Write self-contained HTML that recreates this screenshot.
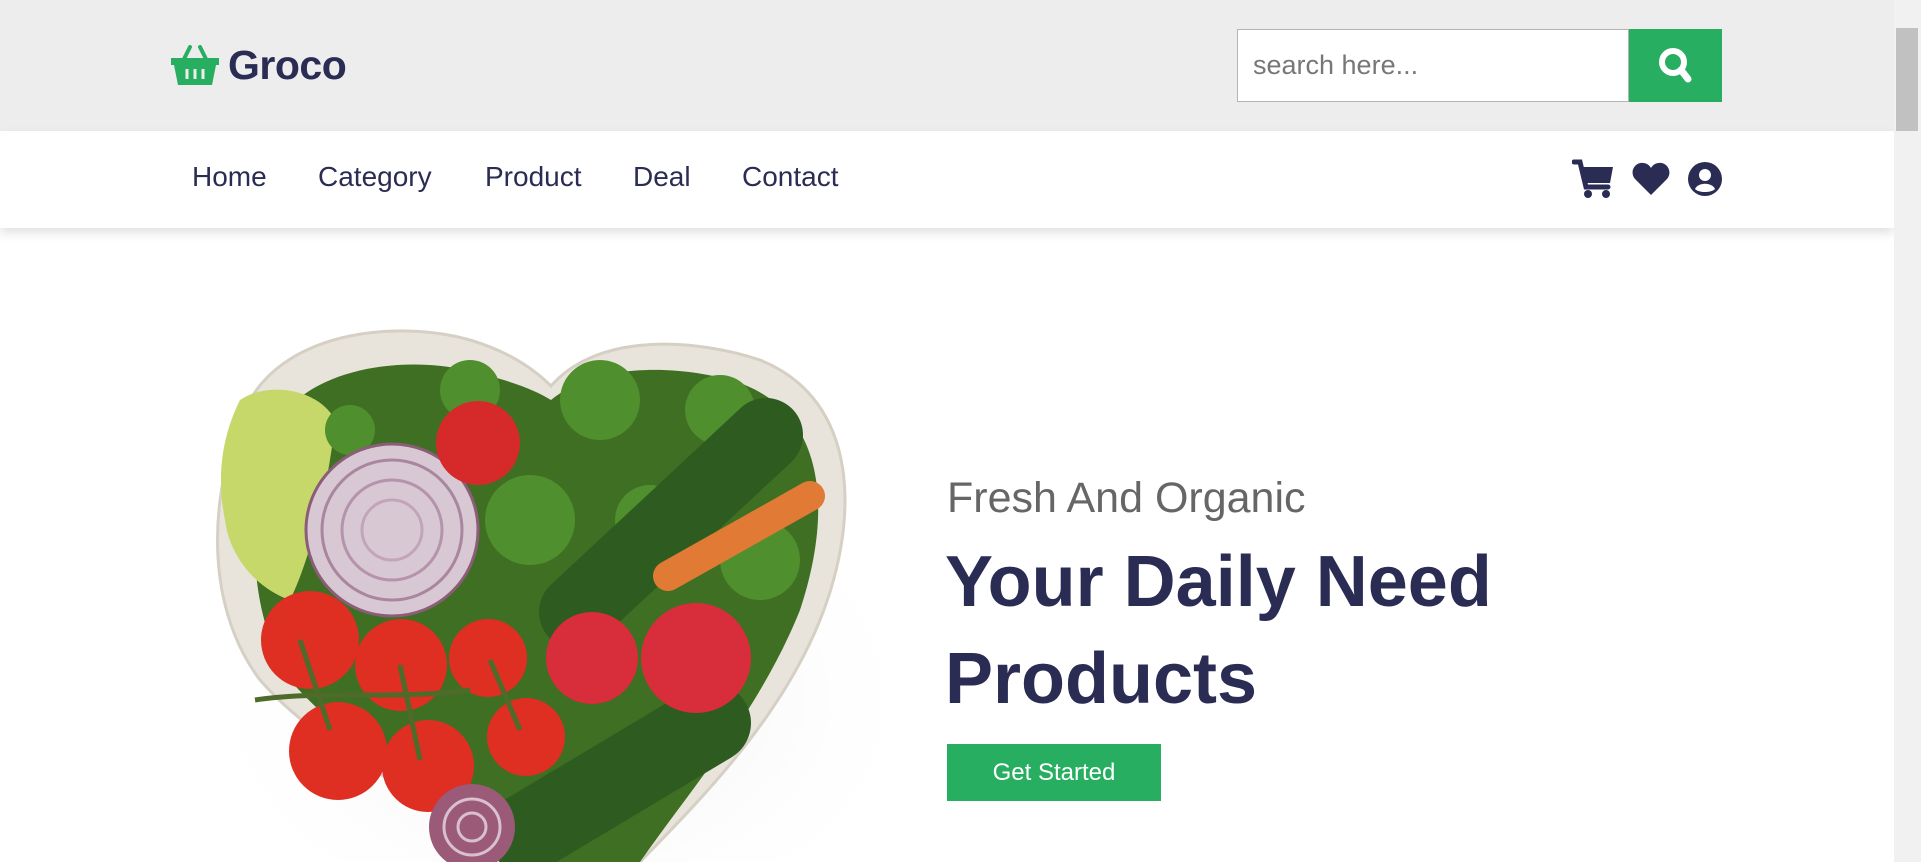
<!DOCTYPE html>
<html><head><meta charset="utf-8"><style>
*{margin:0;padding:0;box-sizing:border-box}
html,body{width:1921px;height:862px;overflow:hidden;background:#fff;font-family:"Liberation Sans",sans-serif}
.top{position:absolute;left:0;top:0;width:1894px;height:131px;background:#ededed}
.logo{position:absolute;left:170px;top:42px;display:flex;align-items:center}
.logo span{font-size:41px;font-weight:bold;color:#2a2c54;margin-left:8px;letter-spacing:-0.5px}
.search{position:absolute;left:1237px;top:29px;width:392px;height:73px;border:1px solid #b5b5b5;background:#fff;font-size:27px;color:#777;padding:20px 0 0 15px}
.sbtn{position:absolute;left:1629px;top:29px;width:93px;height:73px;background:#27ae60}
.nav{position:absolute;left:0;top:131px;width:1894px;height:97px;background:#fff;box-shadow:0 5px 10px rgba(0,0,0,.12)}
.nav a{position:absolute;top:30px;font-size:28px;color:#2a2c54;text-decoration:none}
.sb{position:absolute;left:1894px;top:0;width:27px;height:862px;background:#f1f1f1}
.thumb{position:absolute;left:1896px;top:28px;width:22px;height:103px;background:#c1c1c1}
.h3{position:absolute;left:947px;top:474px;font-size:43px;color:#666}
.h1{position:absolute;left:945px;top:534px;font-size:72px;font-weight:bold;color:#2a2c54;line-height:97px}
.btn{position:absolute;left:947px;top:744px;width:214px;height:57px;background:#27ae60;color:#fff;font-size:24px;text-align:center;line-height:57px}
</style></head><body>
<div class="top">
 <div class="logo"><svg width="50" height="42" viewBox="0 0 50 42"><path d="M14 14 L20 2 M36 14 L30 2" stroke="#27ae60" stroke-width="4" stroke-linecap="round"/><path d="M1 13 H49 V20 H46 L42 40 H8 L4 20 H1Z" fill="#27ae60"/><path d="M17 24V34M25 24V34M33 24V34" stroke="#ededed" stroke-width="3"/></svg><span>Groco</span></div>
 <div class="search">search here...</div>
 <div class="sbtn"><svg width="93" height="73" viewBox="0 0 93 73"><circle cx="44" cy="33" r="11" fill="none" stroke="#fff" stroke-width="6"/><path d="M52 41 L59 50" stroke="#fff" stroke-width="7" stroke-linecap="round"/></svg></div>
</div>
<div class="nav">
 <a style="left:192px">Home</a><a style="left:318px">Category</a><a style="left:485px">Product</a><a style="left:633px">Deal</a><a style="left:742px">Contact</a>
 <svg style="position:absolute;left:1572px;top:28px" width="44" height="40" viewBox="0 0 44 40"><path d="M2 3 H8 L14 28 H36" stroke="#2a2c54" stroke-width="5" fill="none" stroke-linecap="round"/><path d="M9 8 H41 L38 24 H13Z" fill="#2a2c54"/><circle cx="16" cy="35" r="4" fill="#2a2c54"/><circle cx="34" cy="35" r="4" fill="#2a2c54"/></svg>
 <svg style="position:absolute;left:1632px;top:31px" width="38" height="34" viewBox="0 0 38 34"><path d="M19 33 L3 17 C-3 10 3 0 11 1 C15 1 18 4 19 6 C20 4 23 1 27 1 C35 0 41 10 35 17Z" fill="#2a2c54"/></svg>
 <svg style="position:absolute;left:1687px;top:30px" width="36" height="36" viewBox="0 0 36 36"><circle cx="18" cy="18" r="17" fill="#2a2c54"/><circle cx="18" cy="14" r="6" fill="#fff"/><path d="M8 28 C11 21 25 21 28 28 C24 32 12 32 8 28Z" fill="#fff"/></svg>
</div>
<div class="sb"></div><div class="thumb"></div>
<svg style="position:absolute;left:0;top:228px" width="1894" height="634" viewBox="0 228 1894 634">
 <defs><radialGradient id="sh" cx="0.5" cy="0.5" r="0.5"><stop offset="0" stop-color="#ececec"/><stop offset="1" stop-color="#fff" stop-opacity="0"/></radialGradient></defs>
 <ellipse cx="560" cy="700" rx="380" ry="260" fill="url(#sh)"/>
 <path d="M551 386 C600 330 700 340 760 360 C860 400 860 520 820 620 C780 720 700 800 640 862 L520 862 C440 800 330 760 260 680 C200 600 210 480 250 400 C290 330 400 320 470 340 C510 352 535 370 551 386Z" fill="#e8e4dc" stroke="#d6d0c4" stroke-width="3"/>
 <path d="M551 400 C600 360 690 365 745 385 C830 420 830 520 800 610 C760 710 690 790 640 862 L520 862 C450 800 350 750 290 680 C240 600 250 490 280 420 C310 370 400 355 465 370 C510 380 535 390 551 400Z" fill="#3f6f22"/>
 <path d="M240 400 C270 380 320 390 335 420 C330 480 310 560 290 600 C260 590 230 560 225 520 C215 470 225 430 240 400Z" fill="#c6d86a"/>
 <g fill="#4f8f2e"><circle cx="600" cy="400" r="40"/><circle cx="530" cy="520" r="45"/><circle cx="720" cy="410" r="35"/><circle cx="760" cy="560" r="40"/><circle cx="350" cy="430" r="25"/><circle cx="470" cy="390" r="30"/><circle cx="650" cy="520" r="35"/></g>
 <line x1="576" y1="612" x2="766" y2="435" stroke="#2e5b1f" stroke-width="74" stroke-linecap="round"/>
 <line x1="668" y1="576" x2="810" y2="496" stroke="#e07a35" stroke-width="30" stroke-linecap="round"/>
 <circle cx="392" cy="530" r="86" fill="#d8c8d4"/><circle cx="392" cy="530" r="70" fill="none" stroke="#a9869d" stroke-width="3"/><circle cx="392" cy="530" r="50" fill="none" stroke="#b593aa" stroke-width="3"/><circle cx="392" cy="530" r="30" fill="none" stroke="#c2a5b7" stroke-width="3"/><circle cx="392" cy="530" r="86" fill="none" stroke="#8c5d78" stroke-width="3"/>
 <circle cx="478" cy="443" r="42" fill="#d62a2a"/>
 <line x1="527" y1="833" x2="711" y2="723" stroke="#2e5b1f" stroke-width="80" stroke-linecap="round"/>
 <g fill="#df2e22"><circle cx="310" cy="640" r="49"/><circle cx="401" cy="665" r="46"/><circle cx="488" cy="658" r="39"/><circle cx="338" cy="751" r="49"/><circle cx="428" cy="766" r="46"/><circle cx="526" cy="737" r="39"/></g>
 <g fill="#d82d3a"><circle cx="592" cy="658" r="46"/><circle cx="696" cy="658" r="55"/></g>
 <path d="M255 700 C320 690 400 700 470 690 M300 640 L330 730 M400 665 L420 760 M490 660 L520 730" stroke="#4e6b2a" stroke-width="5" fill="none"/>
 <circle cx="472" cy="827" r="43" fill="#9a5a78"/><circle cx="472" cy="827" r="28" fill="none" stroke="#d8c0cc" stroke-width="3"/><circle cx="472" cy="827" r="14" fill="none" stroke="#d8c0cc" stroke-width="3"/>
</svg>
<div class="h3">Fresh And Organic</div>
<div class="h1">Your Daily Need<br>Products</div>
<div class="btn">Get Started</div>
</body></html>
